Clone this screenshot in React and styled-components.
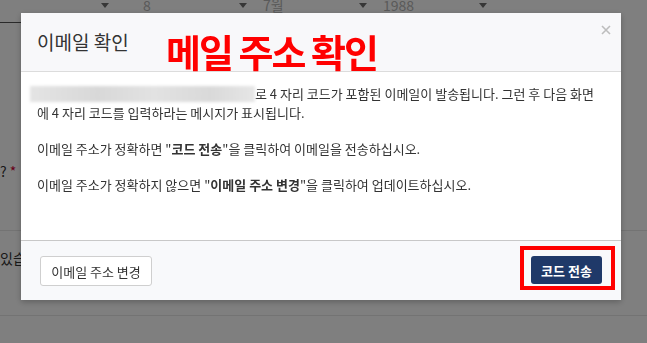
import React from "react";
import styled, { createGlobalStyle } from "styled-components";

const GlobalStyle = createGlobalStyle`
  html, body { margin: 0; padding: 0; background: #fff; overflow: hidden; }
  body { font-family: "Noto Sans CJK KR", "Noto Sans", "Liberation Sans", sans-serif; }
  * { box-sizing: border-box; }
`;

const Page = styled.div`
  position: relative;
  width: 647px;
  height: 343px;
  display: flex;
  flex-direction: column;
  color: #333;
  font-size: 14px;
`;

const DateRow = styled.div`
  display: flex;
  align-items: center;
  height: 18px;
  margin-top: -4px;
  padding-left: 5px;
`;

const Select = styled.div`
  display: flex;
  align-items: center;
  justify-content: space-between;
  width: 104px;
  margin-left: ${(p) => p.$ml || 0}px;
  color: #b4b4b4;
  font-size: 14px;
  line-height: 18px;
`;

const Caret = styled.span`
  width: 0;
  height: 0;
  border-left: 4px solid transparent;
  border-right: 4px solid transparent;
  border-top: 5px solid #6e6e6e;
`;

const Underline = styled.div`
  margin-top: 8px;
  width: 200px;
  height: 1px;
  background: #555;
`;

const QuestionRow = styled.div`
  display: flex;
  align-items: center;
  gap: 3px;
  margin-top: 139px;
  height: 18px;
  font-size: 14px;
  color: #333;
`;

const Req = styled.span`
  color: #c03;
`;

const Dot = styled.span`
  width: 12px;
  height: 12px;
  border-radius: 50%;
  background: #444;
  margin-left: 3px;
`;

const Rule = styled.div`
  height: 1px;
  background: #e6e6e6;
  margin-top: ${(p) => p.$mt}px;
`;

const AnswerText = styled.div`
  margin-top: 18px;
  font-size: 14px;
  line-height: 18px;
  color: #333;
`;

const Overlay = styled.div`
  position: fixed;
  inset: 0;
  background: rgba(0, 0, 0, 0.5);
  display: flex;
  align-items: flex-start;
  padding: 13px 0 0 21px;
`;

const Modal = styled.div`
  position: relative;
  width: 600px;
  background: #fff;
  box-shadow: 0 2px 6px rgba(0, 0, 0, 0.25);
  display: flex;
  flex-direction: column;
`;

const Header = styled.div`
  position: relative;
  height: 59px;
  background: #f8f8fa;
  border-bottom: 1px solid #dcdcdc;
  display: flex;
  align-items: center;
  justify-content: space-between;
  padding: 0 5px 0 16px;
`;

const Title = styled.h2`
  margin: 0;
  font-size: 19px;
  font-weight: 400;
  color: #333;
  line-height: 24px;
`;

const Close = styled.button`
  align-self: flex-start;
  margin-top: 11px;
  width: 20px;
  height: 12px;
  border: 0;
  padding: 0;
  background: transparent;
  display: flex;
  align-items: center;
  justify-content: center;
`;

const Annotation = styled.div`
  position: absolute;
  left: 145px;
  top: 17px;
  font-size: 38px;
  font-weight: 700;
  color: #f00;
  line-height: 42px;
  letter-spacing: -2px;
  white-space: nowrap;
`;

const Body = styled.div`
  padding: 12px 16px 46px 16px;
  font-size: 13px;
  line-height: 19px;
  color: #333;
`;

const Para = styled.p`
  margin: 0 0 17px 0;
  &:last-child { margin-bottom: 0; }
`;

const Redacted = styled.span`
  display: inline-block;
  width: 225px;
  height: 16px;
  margin-left: -7px;
  vertical-align: -3px;
  background: linear-gradient(90deg, #e4e4e4, #d8d8d8 30%, #e2e2e2 55%, #d9d9d9 80%, #e6e6e6);
  filter: blur(1.5px);
`;

const Footer = styled.div`
  background: #f8f9fb;
  border-top: 1px solid #c8c8c8;
  padding: 15px 19px 14px 19px;
  display: flex;
  justify-content: space-between;
  align-items: center;
`;

const SecondaryButton = styled.button`
  height: 30px;
  width: 112px;
  border: 1px solid #cfcfcf;
  border-radius: 3px;
  background: #fff;
  color: #333;
  font-family: inherit;
  font-size: 13px;
  padding: 0;
`;

const Highlight = styled.div`
  position: relative;
  display: flex;
  margin-top: -2px;
`;

const HighlightBox = styled.span`
  position: absolute;
  top: -10px;
  left: -11px;
  right: -13px;
  bottom: -6px;
  border: 4px solid #f00;
  pointer-events: none;
`;

const PrimaryButton = styled.button`
  height: 28px;
  width: 71px;
  border: 0;
  border-radius: 3px;
  background: #1f3969;
  color: #fff;
  font-family: inherit;
  font-size: 13px;
  font-weight: 700;
  padding: 0;
`;

export default function App() {
  return (
    <>
      <GlobalStyle />
      <Page>
        <DateRow>
          <Select><span /><Caret /></Select>
          <Select $ml={34}><span>8</span><Caret /></Select>
          <Select $ml={16}><span>7월</span><Caret /></Select>
          <Select $ml={16}><span>1988</span><Caret /></Select>
        </DateRow>
        <Underline />
        <QuestionRow>
          <span>?</span>
          <Req>*</Req>
          <Dot />
        </QuestionRow>
        <Rule $mt={50} />
        <AnswerText>있습니다</AnswerText>
        <Rule $mt={48} />
      </Page>
      <Overlay>
        <Modal>
          <Header>
            <Title>이메일 확인</Title>
            <Close aria-label="닫기">
              <svg width="10" height="10" viewBox="0 0 10 10">
                <path d="M1 1 L9 9 M9 1 L1 9" stroke="#bdbdbd" strokeWidth="1.6" />
              </svg>
            </Close>
            <Annotation>메일 주소 확인</Annotation>
          </Header>
          <Body>
            <Para>
              <Redacted />로 4 자리 코드가 포함된 이메일이 발송됩니다. 그런 후 다음 화면에 4 자리 코드를 입력하라는 메시지가 표시됩니다.
            </Para>
            <Para>
              이메일 주소가 정확하면 "<b>코드 전송</b>"을 클릭하여 이메일을 전송하십시오.
            </Para>
            <Para>
              이메일 주소가 정확하지 않으면 "<b>이메일 주소 변경</b>"을 클릭하여 업데이트하십시오.
            </Para>
          </Body>
          <Footer>
            <SecondaryButton>이메일 주소 변경</SecondaryButton>
            <Highlight>
              <PrimaryButton>코드 전송</PrimaryButton>
              <HighlightBox />
            </Highlight>
          </Footer>
        </Modal>
      </Overlay>
    </>
  );
}
